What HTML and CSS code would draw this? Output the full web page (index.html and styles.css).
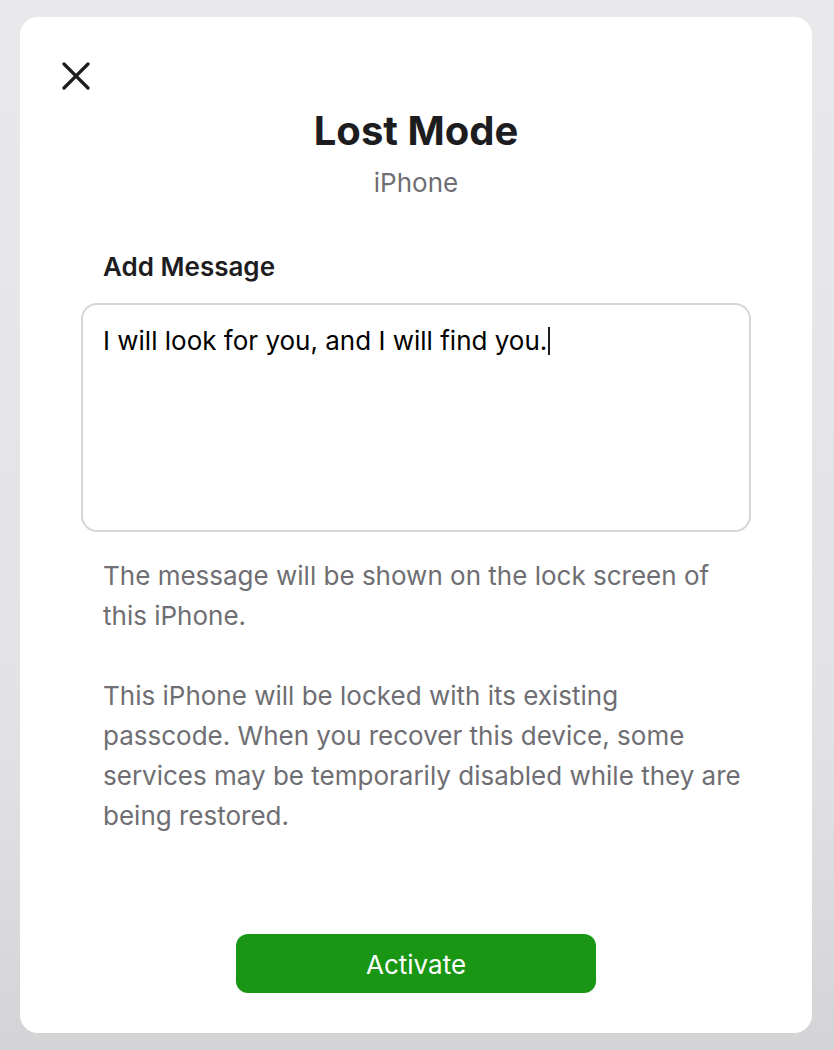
FILE: index.html
```html
<!DOCTYPE html>
<html lang="en">
<head>
    <meta charset="UTF-8">
    <meta name="viewport" content="width=device-width, initial-scale=1.0">
    <title>Lost Mode</title>
    <link rel="stylesheet" href="styles.css">
</head>
<body>
    <div class="sheet">
        <button class="close-btn" aria-label="Close">
            <svg width="28" height="28" viewBox="0 0 28 28">
                <path d="M2 2 L26 26 M26 2 L2 26" stroke="#1d1d1f" stroke-width="3.2" stroke-linecap="round" fill="none"/>
            </svg>
        </button>
        <h1 class="title">Lost Mode</h1>
        <div class="subtitle">iPhone</div>

        <label class="field-label" for="message">Add Message</label>
        <div class="message-box" id="message"><span class="message-text">I will look for you, and I will find you.</span></div>

        <div class="notes">
            <p>The message will be shown on the lock screen of this iPhone.</p>
            <p>This iPhone will be locked with its existing passcode. When you recover this device, some services may be temporarily disabled while they are being restored.</p>
        </div>

        <button class="activate-btn">Activate</button>
    </div>
</body>
</html>
```

FILE: styles.css
```css
body {
    margin: 0;
    height: 100vh;
    background: linear-gradient(to bottom, #e9e9eb 0%, #e2e2e4 70%, #d4d4d6 100%);
    font-family: 'Inter', 'Noto Sans', sans-serif;
    color: #1d1d1f;
    padding: 17px 22px 0 20px;
    box-sizing: border-box;
}
.sheet {
    background-color: #fff;
    border-radius: 18px;
    height: 1016px;
    box-sizing: border-box;
    padding: 0 61px 40px 61px;
    display: flex;
    flex-direction: column;
}
.close-btn {
    width: 28px;
    height: 28px;
    padding: 0;
    margin: 45px 0 0 -19px;
    border: none;
    background: none;
    cursor: pointer;
    align-self: flex-start;
}
.close-btn svg {
    display: block;
}
.title {
    margin: 19px 0 0 0;
    font-size: 40px;
    line-height: 44px;
    font-weight: 700;
    text-align: center;
}
.subtitle {
    margin-top: 14px;
    font-size: 26px;
    line-height: 32px;
    color: #6e6e73;
    text-align: center;
}
.field-label {
    display: block;
    margin-top: 52px;
    padding-left: 22px;
    font-size: 26px;
    line-height: 32px;
    font-weight: 600;
}
.message-box {
    margin-top: 20px;
    height: 229px;
    box-sizing: border-box;
    border: 2px solid #d6d6d8;
    border-radius: 16px;
    padding: 20px 20px 0 20px;
    font-size: 26px;
    line-height: 32px;
    color: #000;
}
.message-text::after {
    content: "";
    display: inline-block;
    width: 2px;
    height: 28px;
    margin-left: 1px;
    background-color: #1d1d1f;
    vertical-align: -5px;
}
.notes {
    margin-top: 24px;
    padding: 0 0 0 22px;
    font-size: 26px;
    line-height: 40px;
    color: #6e6e73;
}
.notes p {
    margin: 0 0 40px 0;
}
.activate-btn {
    margin-top: auto;
    align-self: center;
    width: 360px;
    height: 59px;
    padding-top: 2px;
    border: none;
    border-radius: 12px;
    background-color: #189614;
    color: #fff;
    font-family: inherit;
    font-size: 26px;
    cursor: pointer;
}
```
